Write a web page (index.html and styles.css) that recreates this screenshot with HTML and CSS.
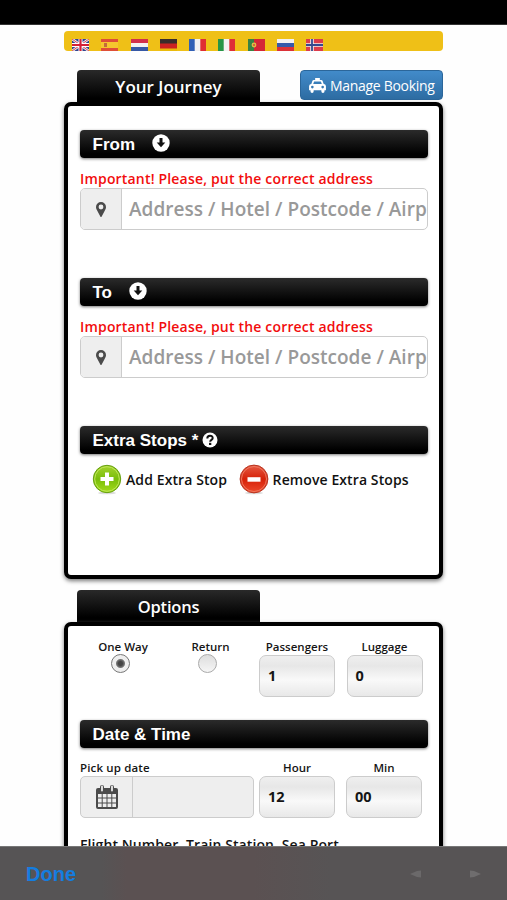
FILE: index.html
```html
<!DOCTYPE html>
<html lang="en">
<head>
<meta charset="utf-8">
<title>Your Journey</title>
<link rel="stylesheet" href="styles.css">
</head>
<body>
<svg class="defs" width="0" height="0">
  <defs>
    <linearGradient id="green" x1="0" y1="0" x2="0" y2="1"><stop offset="0" stop-color="#a5d32e"/><stop offset=".5" stop-color="#79bd0a"/><stop offset="1" stop-color="#a4dc1c"/></linearGradient>
    <linearGradient id="red" x1="0" y1="0" x2="0" y2="1"><stop offset="0" stop-color="#e65a43"/><stop offset=".5" stop-color="#d62108"/><stop offset="1" stop-color="#ee4a2c"/></linearGradient>
    <symbol id="down" viewBox="0 0 18 18"><circle cx="9" cy="9" r="8.7" fill="#fff"/><path d="M7.500 4h3v4.600h2.800L9 13.200 4.700 8.600h2.800z" fill="#111"/></symbol>
    <symbol id="pin" viewBox="0 0 10 15"><path fill-rule="evenodd" d="M5 0a5 5 0 0 1 5 5c0 1.300-.5 2.300-1 3.300L5.700 14.400q-.7 1-1.400 0L1 8.300C.5 7.300 0 6.300 0 5a5 5 0 0 1 5-5zm0 2.600a2.400 2.400 0 1 0 0 4.800 2.400 2.400 0 0 0 0-4.800z" fill="#4b4b4b"/></symbol>
  </defs>
</svg>
<div class="status"></div>
<main class="page">
  <nav class="languages">
    <svg viewBox="0 0 17 12"><path fill="#33438c" d="M0 0h17v12H0z"/><path d="M0 0l17 12M17 0L0 12" stroke="#eee" stroke-width="2.600"/><path d="M0 0l17 12M17 0L0 12" stroke="#d8344b" stroke-width=".9"/><path d="M8.500 0v12M0 6h17" stroke="#fff" stroke-width="4"/><path d="M8.500 0v12M0 6h17" stroke="#d41f37" stroke-width="2.200"/></svg>
    <svg viewBox="0 0 17 12"><path fill="#df4e37" d="M0 0h17v12H0z"/><path fill="#f5c62e" d="M0 3h17v6H0z"/><path fill="#c46a3c" d="M3 4h3v4H3z"/></svg>
    <svg viewBox="0 0 17 12"><path fill="#f3f1f1" d="M0 0h17v12H0z"/><path fill="#d2304a" d="M0 0h17v4H0z"/><path fill="#3658a5" d="M0 8h17v4H0z"/></svg>
    <svg viewBox="0 0 17 12"><path fill="#cb2221" d="M0 0h17v12H0z"/><path fill="#3a2c2b" d="M0 0h17v4.500H0z"/><path fill="#eaba0b" d="M0 9.500h17V12H0z"/></svg>
    <svg viewBox="0 0 17 12"><path fill="#f3f1f1" d="M0 0h17v12H0z"/><path fill="#315fb5" d="M0 0h5.700v12H0z"/><path fill="#e02d32" d="M11.300 0H17v12h-5.700z"/></svg>
    <svg viewBox="0 0 17 12"><path fill="#f3f1f1" d="M0 0h17v12H0z"/><path fill="#279546" d="M0 0h5.700v12H0z"/><path fill="#df3037" d="M11.300 0H17v12h-5.700z"/></svg>
    <svg viewBox="0 0 17 12"><path fill="#d52637" d="M0 0h17v12H0z"/><path fill="#398343" d="M0 0h6v12H0z"/><circle cx="6" cy="6" r="2.400" fill="#dfbd45"/><circle cx="6" cy="6" r="1" fill="#d54c35"/></svg>
    <svg viewBox="0 0 17 12"><path fill="#f3f1f1" d="M0 0h17v12H0z"/><path fill="#3559a9" d="M0 4h17v4H0z"/><path fill="#db3137" d="M0 8h17v4H0z"/></svg>
    <svg viewBox="0 0 17 12"><path fill="#dc3c4b" d="M0 0h17v12H0z"/><path d="M6 0v12M0 6h17" stroke="#eee" stroke-width="3.600"/><path d="M6 0v12M0 6h17" stroke="#34498f" stroke-width="1.800"/></svg>
  </nav>

  <header class="heading">
    <h1 class="tab">Your Journey</h1>
    <a class="manage">
      <svg width="17" height="15" viewBox="0 0 18 16"><path fill="#fff" fill-rule="evenodd" d="M6.500 0h5v2H13q1 0 1.400 1l1.200 3.500H16q2 .4 2 2.300V13h-1.500v1.200a1.700 1.700 0 0 1-3.400 0V13H4.900v1.200a1.700 1.700 0 0 1-3.400 0V13H0V8.800q0-1.900 2-2.300h.4L3.600 3Q4 2 5 2h1.500zM5.400 3.700l-1 2.800h9.200l-1-2.800zM3.500 8.300a1.400 1.400 0 1 0 0 2.800 1.400 1.400 0 0 0 0-2.800zm11 0a1.400 1.400 0 1 0 0 2.800 1.400 1.400 0 0 0 0-2.800z"/></svg>
      <span>Manage Booking</span>
    </a>
  </header>

  <section class="panel journey">
    <div class="place">
      <h2 class="bar"><span>From</span><svg class="arrow"><use href="#down"/></svg></h2>
      <p class="alert">Important! Please, put the correct address</p>
      <div class="field"><span class="addon"><svg width="10" height="15"><use href="#pin"/></svg></span><span class="hint">Address / Hotel / Postcode / Airp</span></div>
    </div>
    <div class="place">
      <h2 class="bar"><span>To</span><svg class="arrow"><use href="#down"/></svg></h2>
      <p class="alert">Important! Please, put the correct address</p>
      <div class="field"><span class="addon"><svg width="10" height="15"><use href="#pin"/></svg></span><span class="hint">Address / Hotel / Postcode / Airp</span></div>
    </div>
    <h2 class="bar"><span>Extra Stops *</span><svg class="help" viewBox="0 0 16 16"><circle cx="8" cy="8" r="7.500" fill="#fff"/><path d="M5.300 6.400C5.300 2.800 10.800 3 10.700 6.100 10.700 8 8.200 7.700 8.200 9.700" fill="none" stroke="#111" stroke-width="2"/><path d="M7 10.800h2.300V13H7z" fill="#111"/></svg></h2>
    <div class="stops">
      <svg class="round" viewBox="0 0 30 32"><ellipse cx="15" cy="29" rx="9" ry="1.300" fill="#ddd"/><circle cx="15" cy="15" r="13.700" fill="url(#green)" stroke="#669f10"/><circle cx="15" cy="15" r="12.300" fill="none" stroke="#bfe65a"/><path d="M13 8.500h4V13h4.500v4H17v4.500h-4V17H8.500v-4H13z" fill="#fff"/></svg>
      <span>Add Extra Stop</span>
      <svg class="round remove" viewBox="0 0 30 32"><ellipse cx="15" cy="29" rx="9" ry="1.300" fill="#ddd"/><circle cx="15" cy="15" r="13.900" fill="url(#red)" stroke="#b63420"/><circle cx="15" cy="15" r="12.500" fill="none" stroke="#f07a61"/><path d="M8.500 13.200h13v4.500h-13z" fill="#fff"/></svg>
      <span>Remove Extra Stops</span>
    </div>
  </section>

  <h1 class="tab second">Options</h1>
  <section class="panel options">
    <div class="grid trip">
      <div class="choice one"><label>One Way</label><i class="radio on"></i></div>
      <div class="choice return"><label>Return</label><i class="radio"></i></div>
      <div class="cell"><label>Passengers</label><b class="select">1</b></div>
      <div class="cell"><label>Luggage</label><b class="select">0</b></div>
    </div>
    <h2 class="bar"><span>Date &amp; Time</span></h2>
    <div class="grid when">
      <div class="cell"><label class="left">Pick up date</label><div class="datebox"><span class="cal"><svg width="22" height="24" viewBox="0 0 22 24"><path fill="#4b4b4b" fill-rule="evenodd" d="M2 3h2V2q0-2 2-2t2 2v1h6V2q0-2 2-2t2 2v1h2q2 0 2 2v17q0 2-2 2H2q-2 0-2-2V5q0-2 2-2zm0 6v3.500h3.700V9zm4.700 0v3.500h3.800V9zm4.800 0v3.500h3.800V9zm4.800 0v3.500H20V9zM2 13.500v4h3.700v-4zm4.700 0v4h3.800v-4zm4.800 0v4h3.800v-4zm4.800 0v4H20v-4zM2 18.500V22h3.700v-3.500zm4.700 0V22h3.800v-3.500zm4.800 0V22h3.800v-3.500zm4.800 0V22H20v-3.500z"/><path d="M6 1.500v4M16 1.500v4" stroke="#eee" stroke-width="1.800" stroke-linecap="round"/></svg></span></div></div>
      <div class="cell"><label>Hour</label><b class="select">12</b></div>
      <div class="cell"><label>Min</label><b class="select">00</b></div>
    </div>
    <p class="flight">Flight Number, Train Station, Sea Port</p>
  </section>
</main>
<footer class="toolbar">
  <span class="done">Done</span>
  <svg class="prev" width="12" height="8" viewBox="0 0 12 8"><path d="M0 4l7-3 4-.5v7L7 7z" fill="#6b696a"/></svg>
  <svg width="12" height="8" viewBox="0 0 12 8"><path d="M12 4L5 1 1 .5v7L5 7z" fill="#6f6d6e"/></svg>
</footer>
</body>
</html>
```

FILE: styles.css
```css
* { box-sizing: border-box; }
html, body { height: 900px; margin: 0; overflow: hidden; }
body { background: #fefefe; color: #151515; font-family: "Trebuchet MS", "Open Sans", sans-serif; }
h1, h2, p { margin: 0; }
span, label, p { white-space: nowrap; }
svg { display: block; flex: none; }
.defs { position: absolute; }
.status { height: 25px; background: #000; border-bottom: 1px solid #333; }
.page { width: 379px; margin-left: 64px; }
.languages { display: flex; gap: 12.300px; height: 20px; margin-top: 6px; padding: 8px 0 0 8px; border-radius: 4px; background: #efc017; overflow: hidden; }
.languages svg { width: 17px; height: 12px; }
.heading { display: flex; justify-content: space-between; height: 32px; margin-top: 19px; padding-left: 13px; }
.tab { width: 183px; height: 33px; border-radius: 4px 4px 0 0; background: linear-gradient(#292929, #000 85%); color: #fff; font-size: 17px; font-weight: 600; line-height: 34px; text-align: center; }
.tab.second { margin: 11px 0 0 13px; height: 32px; font-size: 16.500px; letter-spacing: -.2px; }
.manage { display: flex; align-items: center; gap: 4px; width: 143px; height: 30px; padding-left: 8px; border: 1px solid #2b669a; border-radius: 4px; background: linear-gradient(#428bca, #2d6ca2); color: #fff; font-size: 14px; letter-spacing: -.3px; }
.panel { border: 4px solid #000; border-radius: 7px; background: #fff; box-shadow: 0 2px 4px #777; padding: 0 11.500px 0 12px; }
.journey { height: 477px; padding-top: 24px; }
.place { height: 148px; }
.bar { display: flex; align-items: center; height: 28px; padding-left: 12.500px; border-radius: 4px; background: linear-gradient(#2b2b2b, #000 85%); box-shadow: 0 1px 3px #777; color: #fff; font: bold 17px/28px "Liberation Sans", sans-serif; }
.bar span { padding-top: 1px; }
.arrow { width: 18px; height: 18px; margin: -2px 0 0 16.500px; }
.help { width: 16px; height: 16px; margin-left: 4px; }
.alert { height: 30px; padding-top: 11px; color: #f20d0d; font-size: 14px; font-weight: 600; line-height: 20px; letter-spacing: .18px; }
.field { display: flex; height: 42px; border: 1px solid #ccc; border-radius: 5px; overflow: hidden; }
.addon { display: flex; align-items: center; justify-content: center; width: 41px; flex: none; border-right: 1px solid #ccc; background: #eee; }
.hint { padding-left: 7px; color: #999; font-size: 19px; font-weight: 600; line-height: 40px; letter-spacing: .02px; }
.stops { display: flex; align-items: center; height: 32px; margin-top: 10px; padding-left: 12px; color: #111; font-size: 14px; font-weight: 600; letter-spacing: .1px; line-height: 32px; }
.round { width: 30px; height: 32px; margin-right: 4px; }
.remove { margin-left: 11.500px; }
.options { height: 310px; padding-top: 13px; }
.grid { display: grid; column-gap: 11px; justify-content: start; }
.trip { grid-template-columns: 81px 76px 76px 76px; height: 81px; }
.choice, .cell { display: flex; flex-direction: column; align-items: center; }
.trip .cell:last-child { margin-left: .5px; margin-right: -.5px; }
label { height: 15px; font-size: 11.500px; font-weight: 600; line-height: 15px; }
.choice.one label { margin-left: 5px; }
.choice.return label { margin-left: 1px; }
.radio { width: 19px; height: 19px; border: 1px solid #aaa; border-radius: 50%; background: linear-gradient(#ddd, #f6f6f6); }
.choice.return .radio { margin-right: 5px; }
.on { border: 1px solid #777; background: radial-gradient(circle, #444 0 2px, #777 4px, #eee 5px); }
.select { width: 76px; height: 42px; margin-top: 1px; padding-left: 8px; border: 1px solid #ccc; border-radius: 7px; background: linear-gradient(#efefef, #e7e7e7 25%, #f9f9f9 60%, #e8e8e8); color: #151515; font-size: 14.500px; font-weight: 700; line-height: 40px; }
.when { grid-template-columns: 174px 76px 76px; column-gap: 11px; margin-top: 12px; }
.when .cell:not(:first-child) { margin-left: -6px; margin-right: 6px; }
.left { align-self: flex-start; letter-spacing: .15px; }
.datebox { align-self: flex-start; width: 174px; height: 42px; margin-top: 1px; border: 1px solid #ccc; border-radius: 5px; background: #eee; }
.cal { display: flex; align-items: center; justify-content: center; width: 52px; height: 40px; border-right: 1px solid #ccc; }
.flight { margin-top: 17px; font-size: 14px; font-weight: 600; line-height: 20px; letter-spacing: .1px; }
.toolbar { position: fixed; inset: 846px 0 0; display: flex; align-items: center; padding: 0 26px; border-top: 1px solid #777; background: linear-gradient(90deg, #565455 20%, #5b5152 25% 50%, #575455 65%); }
.done { margin-right: auto; color: #147de0; font: bold 20px/24px "Liberation Sans", sans-serif; }
.prev { margin-right: 47px; }
```
